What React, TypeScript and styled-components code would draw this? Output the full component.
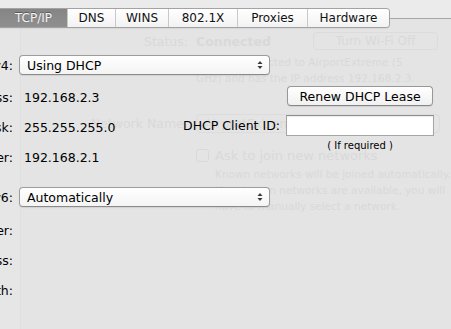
import React from "react";
import styled, { createGlobalStyle } from "styled-components";

const Global = createGlobalStyle`
  html, body { margin: 0; padding: 0; background: #e4e4e4; }
  body { font-family: "DejaVu Sans", "Liberation Sans", sans-serif; }
`;

const Stage = styled.div`
  position: relative;
  width: 451px;
  height: 329px;
  overflow: hidden;
  background: #e4e4e4;
  font-family: "DejaVu Sans", "Liberation Sans", sans-serif;
`;

/* ---------- faded window behind the sheet ---------- */
const Ghost = styled.div`
  display: flex;
  height: 100%;
  color: #d9d9d9;
  font-size: 12.5px;
`;
const GhostSidebar = styled.div`
  width: 20px;
  flex: none;
  background: #e6e6e6;
  border-right: 1px solid #dfdfdf;
`;
const GhostMain = styled.div`
  flex: 1;
  display: flex;
  flex-direction: column;
  padding-top: 32px;
`;
const GhostRow = styled.div<{ $top: number; $h?: number }>`
  display: grid;
  grid-template-columns: 167px 1fr;
  column-gap: 8px;
  align-items: center;
  margin-top: ${(p) => p.$top}px;
  ${(p) => (p.$h ? `height: ${p.$h}px;` : "")}
`;
const GhostLabel = styled.div`
  text-align: right;
  white-space: nowrap;
`;
const GhostStatus = styled.div`
  display: flex;
  align-items: center;
  justify-content: space-between;
  padding-right: 13px;
`;
const GhostBold = styled.span`
  font-weight: bold;
`;
const GhostButton = styled.div`
  width: 125px;
  height: 18px;
  box-sizing: border-box;
  border: 1px solid #dcdcdc;
  border-radius: 4px;
  display: flex;
  align-items: center;
  justify-content: center;
  font-size: 12px;
`;
const GhostSmall = styled.div<{ $indent?: number }>`
  font-size: 10.5px;
  line-height: 16px;
  white-space: nowrap;
  padding-left: ${(p) => p.$indent ?? 0}px;
`;
const GhostPopup = styled.div`
  width: 244px;
  height: 19px;
  box-sizing: border-box;
  border: 1px solid #dcdcdc;
  border-radius: 4px;
  padding-left: 7px;
  display: flex;
  align-items: center;
`;
const GhostCheckRow = styled.div`
  display: flex;
  align-items: center;
  gap: 6px;
  font-size: 13px;
`;
const GhostCheck = styled.div`
  width: 13px;
  height: 13px;
  box-sizing: border-box;
  border: 1px solid #d9d9d9;
  border-radius: 3px;
`;

/* ---------- sheet ---------- */
const Sheet = styled.div`
  position: absolute;
  inset: 0;
  display: flex;
  flex-direction: column;
  color: #000;
  font-size: 12.5px;
`;
const TabRow = styled.div`
  display: flex;
  height: 28px;
  padding-top: 8px;
  box-sizing: border-box;
  background: linear-gradient(#ebebeb 0 18px, transparent 18px);
`;
const Tabs = styled.div`
  display: flex;
  height: 20px;
  box-sizing: border-box;
  border: 1px solid #a3a3a3;
  border-left: none;
  border-radius: 0 4px 4px 0;
  overflow: hidden;
  box-shadow: 0 1px 1px rgba(0, 0, 0, 0.06);
`;
const Tab = styled.div<{ $w: number; $active?: boolean }>`
  width: ${(p) => p.$w}px;
  box-sizing: border-box;
  display: flex;
  align-items: center;
  justify-content: center;
  font-size: 12px;
  background: ${(p) =>
    p.$active ? "linear-gradient(#858585, #8f8f8f)" : "linear-gradient(#ffffff, #f2f2f2)"};
  color: ${(p) => (p.$active ? "#f6f6f6" : "#111")};
  text-shadow: ${(p) => (p.$active ? "0 -1px 0 rgba(0,0,0,0.35)" : "0 1px 0 #fff")};
  & + & {
    border-left: 1px solid #c9c9c9;
  }
`;
const TabLine = styled.div`
  flex: 1;
  height: 1px;
  margin-top: 10px;
  background: #a6a6a6;
`;

const Body = styled.div`
  display: flex;
  flex-direction: column;
  padding: 27px 17px 0 0;
`;
const Row = styled.div<{ $top?: number }>`
  display: flex;
  align-items: center;
  height: 20px;
  margin-top: ${(p) => p.$top ?? 0}px;
`;
const Label = styled.div`
  width: 13px;
  flex: none;
  display: flex;
  justify-content: flex-end;
  white-space: nowrap;
  margin-right: 6px;
`;
const Value = styled.div`
  padding-left: 5px;
  white-space: nowrap;
`;
const Popup = styled.div`
  width: 251px;
  height: 20px;
  box-sizing: border-box;
  border: 1px solid #9c9c9c;
  border-bottom-color: #8a8a8a;
  border-radius: 4px;
  background: linear-gradient(#ffffff, #f4f4f4);
  box-shadow: 0 1px 1px rgba(0, 0, 0, 0.08);
  display: flex;
  align-items: center;
  justify-content: space-between;
  padding: 0 6px 0 7px;
`;
const Split = styled.div`
  display: flex;
  justify-content: space-between;
`;
const LeftCol = styled.div`
  display: flex;
  flex-direction: column;
  gap: 10px;
  padding-top: 12px;
`;
const RightCol = styled.div`
  display: flex;
  flex-direction: column;
  align-items: flex-end;
  padding-top: 11px;
`;
const PushButton = styled.div`
  width: 146px;
  height: 20px;
  margin-right: 1px;
  box-sizing: border-box;
  border: 1px solid #979797;
  border-bottom-color: #858585;
  border-radius: 4px;
  background: linear-gradient(#ffffff, #f1f1f1);
  box-shadow: 0 1px 1px rgba(0, 0, 0, 0.08);
  display: flex;
  align-items: center;
  justify-content: center;
  white-space: nowrap;
`;
const FieldRow = styled.div`
  display: flex;
  align-items: center;
  gap: 6px;
  margin-top: 9px;
  white-space: nowrap;
`;
const TextField = styled.div`
  width: 148px;
  height: 21px;
  box-sizing: border-box;
  background: #fff;
  border: 1px solid #a5a5a5;
  border-top-color: #8e8e8e;
  box-shadow: inset 0 1px 1px rgba(0, 0, 0, 0.08);
`;
const Hint = styled.div`
  width: 148px;
  margin-top: 4px;
  font-size: 10px;
  line-height: 12px;
  text-align: center;
`;
const V6Section = styled.div`
  display: flex;
  flex-direction: column;
  margin-top: 20px;
`;

const Arrows = () => (
  <svg width="6" height="10" viewBox="0 0 6 10">
    <path d="M3 1 L5.5 4 L0.5 4 Z" fill="#3a3a3a" />
    <path d="M3 9 L5.5 6 L0.5 6 Z" fill="#3a3a3a" />
  </svg>
);

const tabs: { name: string; w: number }[] = [
  { name: "TCP/IP", w: 67 },
  { name: "DNS", w: 48 },
  { name: "WINS", w: 53 },
  { name: "802.1X", w: 69 },
  { name: "Proxies", w: 70 },
  { name: "Hardware", w: 82 },
];

export default function App() {
  return (
    <Stage>
      <Global />
      <Ghost>
        <GhostSidebar />
        <GhostMain>
          <GhostRow $top={0} $h={18}>
            <GhostLabel>Status:</GhostLabel>
            <GhostStatus>
              <GhostBold>Connected</GhostBold>
              <GhostButton>Turn Wi-Fi Off</GhostButton>
            </GhostStatus>
          </GhostRow>
          <GhostRow $top={4}>
            <GhostLabel />
            <GhostSmall>
              Wi-Fi is connected to AirportExtreme (5
              <br />
              GHz) and has the IP address 192.168.2.3.
            </GhostSmall>
          </GhostRow>
          <GhostRow $top={27} $h={20}>
            <GhostLabel>Network Name:</GhostLabel>
            <GhostPopup>AirportExtreme</GhostPopup>
          </GhostRow>
          <GhostRow $top={15} $h={14}>
            <GhostLabel />
            <GhostCheckRow>
              <GhostCheck />
              Ask to join new networks
            </GhostCheckRow>
          </GhostRow>
          <GhostRow $top={4}>
            <GhostLabel />
            <GhostSmall $indent={19}>
              Known networks will be joined automatically.
              <br />
              If no known networks are available, you will
              <br />
              have to manually select a network.
            </GhostSmall>
          </GhostRow>
        </GhostMain>
      </Ghost>

      <Sheet>
        <TabRow>
          <Tabs>
            {tabs.map((t, i) => (
              <Tab key={t.name} $w={t.w} $active={i === 0}>
                {t.name}
              </Tab>
            ))}
          </Tabs>
          <TabLine />
        </TabRow>

        <Body>
          <Row>
            <Label>Configure IPv4:</Label>
            <Popup>
              <span>Using DHCP</span>
              <Arrows />
            </Popup>
          </Row>

          <Split>
            <LeftCol>
              <Row>
                <Label>IP Address:</Label>
                <Value>192.168.2.3</Value>
              </Row>
              <Row>
                <Label>Subnet Mask:</Label>
                <Value>255.255.255.0</Value>
              </Row>
              <Row>
                <Label>Router:</Label>
                <Value>192.168.2.1</Value>
              </Row>
            </LeftCol>
            <RightCol>
              <PushButton>Renew DHCP Lease</PushButton>
              <FieldRow>
                DHCP Client ID:
                <TextField />
              </FieldRow>
              <Hint>( If required )</Hint>
            </RightCol>
          </Split>

          <V6Section>
            <Row>
              <Label>Configure IPv6:</Label>
              <Popup>
                <span>Automatically</span>
                <Arrows />
              </Popup>
            </Row>
            <Row $top={13}>
              <Label>Router:</Label>
            </Row>
            <Row $top={10}>
              <Label>IPv6 Address:</Label>
            </Row>
            <Row $top={10}>
              <Label>Prefix Length:</Label>
            </Row>
          </V6Section>
        </Body>
      </Sheet>
    </Stage>
  );
}
